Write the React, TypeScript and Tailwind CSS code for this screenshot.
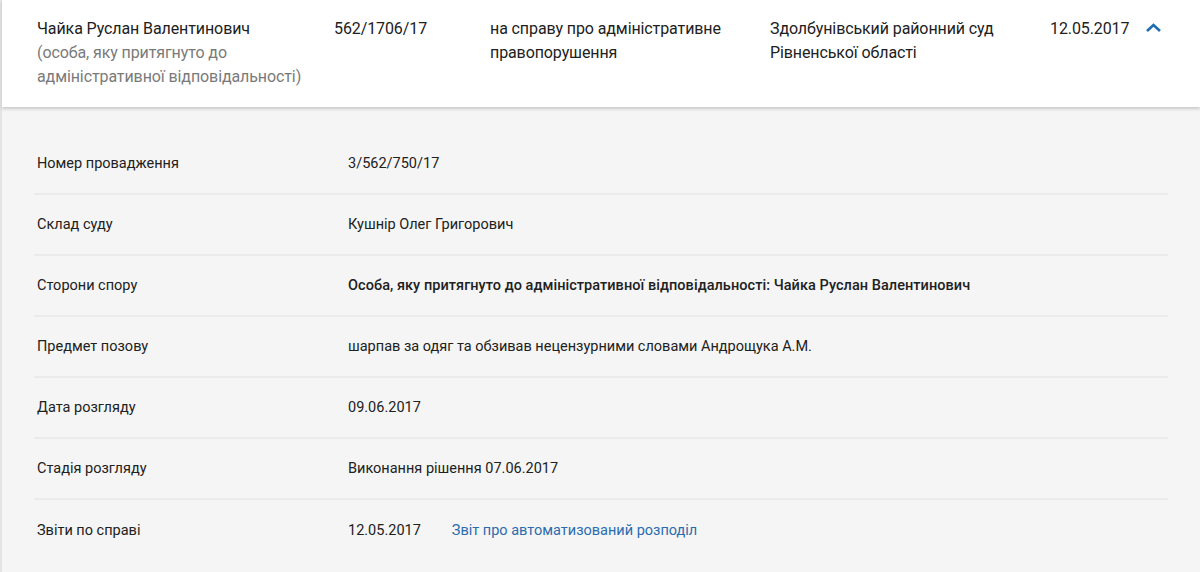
import React from "react";

const rows: { label: string; value: React.ReactNode }[] = [
  { label: "Номер провадження", value: "3/562/750/17" },
  { label: "Склад суду", value: "Кушнір Олег Григорович" },
  {
    label: "Сторони спору",
    value: <span className="font-medium tracking-[0.05px]">Особа, яку притягнуто до адміністративної відповідальності: Чайка Руслан Валентинович</span>,
  },
  { label: "Предмет позову", value: "шарпав за одяг та обзивав нецензурними словами Андрощука А.М." },
  { label: "Дата розгляду", value: "09.06.2017" },
  { label: "Стадія розгляду", value: "Виконання рішення 07.06.2017" },
  {
    label: "Звіти по справі",
    value: (
      <span className="flex gap-[31px]">
        <span>12.05.2017</span>
        <a className="text-[#2b6cb0]" href="#">Звіт про автоматизований розподіл</a>
      </span>
    ),
  },
];

export default function App() {
  return (
    <div className="min-h-[572px] border-l-2 border-[#e4e4e4] bg-[#f5f5f5] font-['Roboto',sans-serif] text-[#212121]">
      <header className="relative z-10 grid grid-cols-[297px_156px_280px_280px_1fr] bg-white pb-[18px] pl-[35px] pt-[17px] text-[16px] leading-[24px] tracking-[-0.1px] shadow-[0_2px_3px_rgba(0,0,0,0.18)]">
        <div>
          <p>Чайка Руслан Валентинович</p>
          <p className="text-[#7a7a7a]">(особа, яку притягнуто до адміністративної відповідальності)</p>
        </div>
        <p>562/1706/17</p>
        <p className="pr-4">на справу про адміністративне правопорушення</p>
        <p className="pr-4">Здолбунівський районний суд Рівненської області</p>
        <div className="flex items-start gap-[16px]">
          <span>12.05.2017</span>
          <svg className="mt-[5px]" width="17" height="11" viewBox="0 0 17 11" fill="none">
            <path d="M2 9 L8.5 3 L15 9" stroke="#1f6db3" strokeWidth="2.6" />
          </svg>
        </div>
      </header>

      <section className="pb-3 pt-[27px]">
        <div className="ml-[32px] w-[1134px]">
          {rows.map((row, i) => (
            <div
              className={`grid h-[61px] grid-cols-[314px_1fr] items-center text-[14.5px] ${i < rows.length - 1 ? "border-b-2 border-[#ebebeb]" : ""}`}
              key={row.label}
            >
              <span className="pl-[3px]">{row.label}</span>
              <span>{row.value}</span>
            </div>
          ))}
        </div>
      </section>
    </div>
  );
}
